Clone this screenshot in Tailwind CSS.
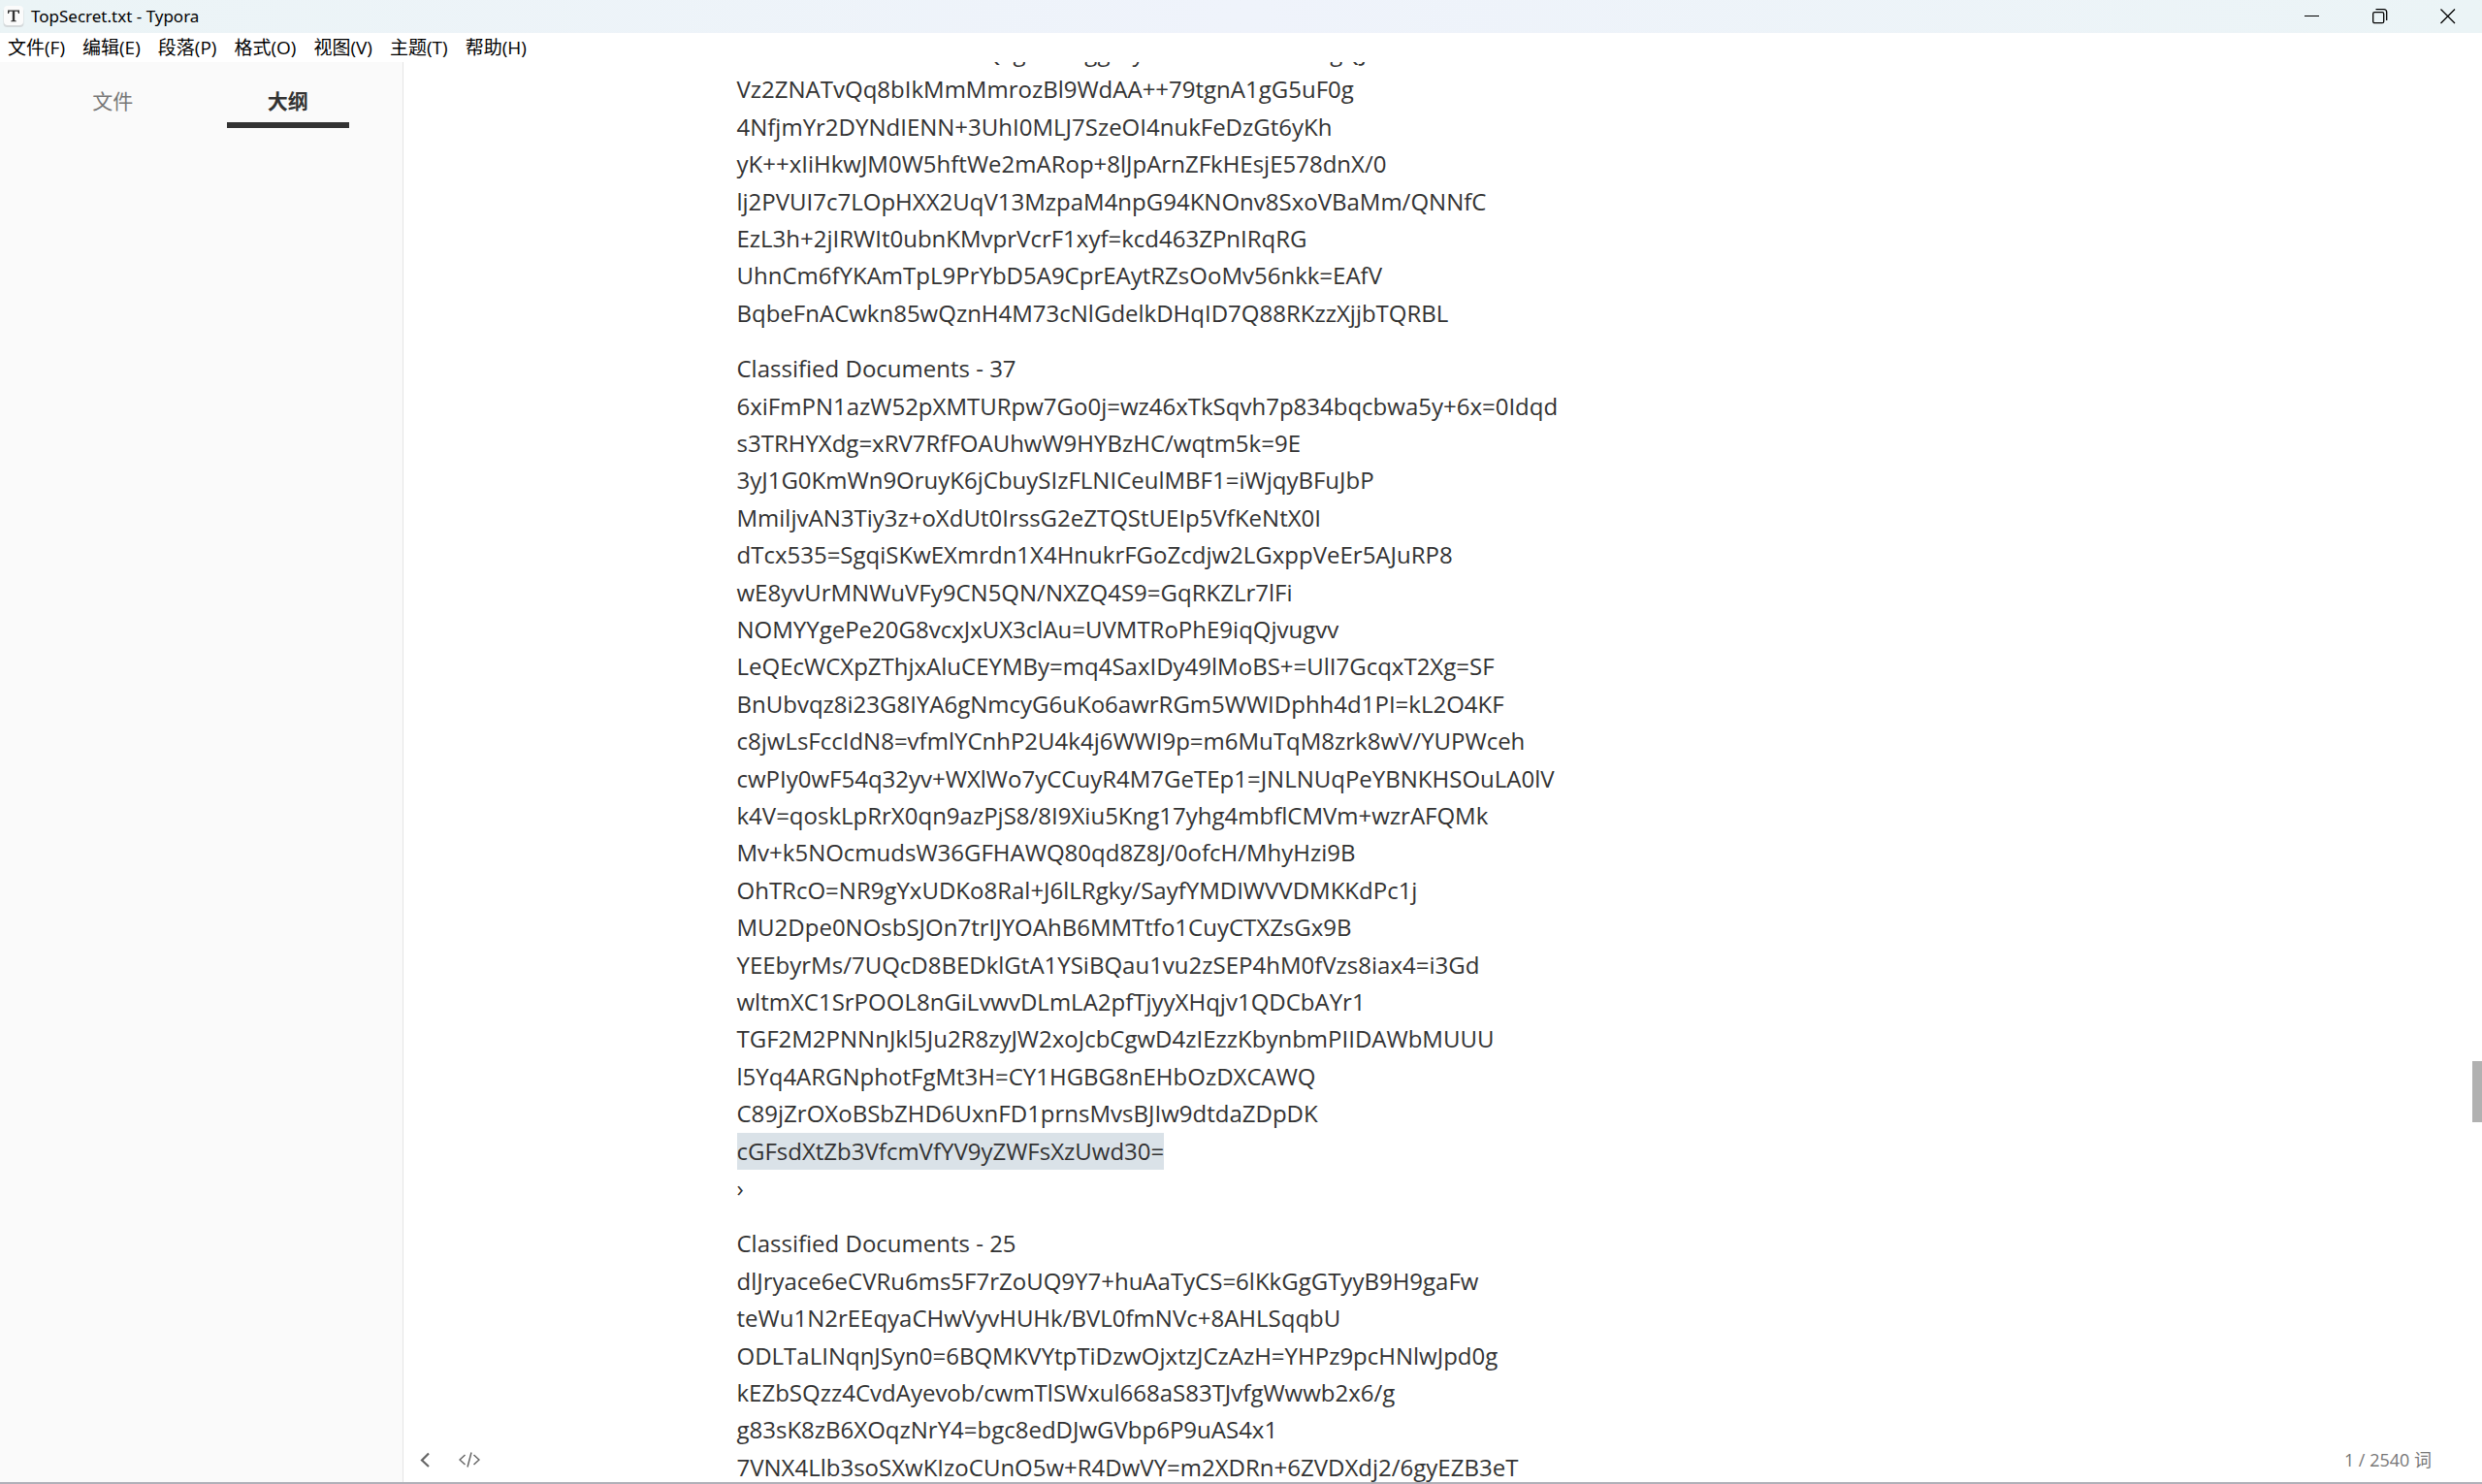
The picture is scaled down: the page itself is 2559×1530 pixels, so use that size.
<!DOCTYPE html>
<html lang="zh-CN">
<head>
<meta charset="utf-8">
<title>TopSecret.txt - Typora</title>
<script src="https://cdn.jsdelivr.net/npm/@tailwindcss/browser@4"></script>
</head>
<body class="flex h-screen flex-col overflow-hidden border-b-2 border-[#b0b0b8] bg-white font-['Open_Sans','Noto_Sans_CJK_SC',sans-serif] text-[#333]">
  <header class="flex h-[34px] shrink-0 items-center bg-linear-to-r from-[#ebf4f6] via-[#eff3fb] to-[#ebf4f6] text-black">
    <svg class="ml-[3px] size-[22px]" viewBox="0 0 22 22">
      <rect x="0.5" y="2" width="21" height="20" rx="4" fill="#d5d9db"/>
      <rect x="1" y="0" width="20" height="20" rx="4" fill="#fbfbfb"/>
      <path d="M5 4.500H17V8H16L15.200 5.700H12.200V15L13.800 15.500V16.200H8.200V15.500L9.800 15V5.700H6.800L6 8H5Z" fill="#333"/>
    </svg>
    <h1 class="ml-[7px] grow font-['Noto_Sans',sans-serif] text-[17px] leading-6">TopSecret.txt - Typora</h1>
    <button aria-label="最小化" class="flex h-full w-[70px] items-center justify-center"><svg class="size-4" viewBox="0 0 16 16"><path d="M0 7.500H15" stroke="#000" fill="none"/></svg></button>
    <button aria-label="还原" class="flex h-full w-[70px] items-center justify-center"><svg class="size-4" viewBox="0 0 16 16" fill="none" stroke="#000" stroke-width="1.300"><rect x="0.700" y="3.700" width="11" height="11" rx="1.500"/><path d="M3.500 0.700H12A2.700 2.700 0 0 1 14.700 3.400V12"/></svg></button>
    <button aria-label="关闭" class="flex h-full w-[70px] items-center justify-center"><svg class="size-4" viewBox="0 0 16 16"><path d="M0.500 0.500L15 15M15 0.500L0.500 15" stroke="#000" stroke-width="1.300" fill="none"/></svg></button>
  </header>
  <nav class="flex h-[30px] shrink-0 items-center gap-[18px] px-2 text-[19px] leading-6 text-black">
    <button>文件(F)</button>
    <button>编辑(E)</button>
    <button>段落(P)</button>
    <button>格式(O)</button>
    <button>视图(V)</button>
    <button>主题(T)</button>
    <button>帮助(H)</button>
  </nav>
  <div class="flex min-h-0 grow">
    <aside class="w-[416px] shrink-0 border-r border-[#e5e5e5] bg-[#fafafa] pt-6 pr-7 pl-[26px]">
      <div role="tablist" class="flex text-[21px] leading-8">
        <button role="tab" class="mx-[27px] flex-1 border-b-6 border-transparent pb-1.5 text-[#777]">文件</button>
        <button role="tab" aria-selected="true" class="mx-[27px] flex-1 border-b-6 border-[#333] pb-1.5 font-bold">大纲</button>
      </div>
    </aside>
    <div class="relative flex min-w-0 grow">
      <main class="min-w-0 grow overflow-hidden">
        <article class="mx-auto -mt-[29px] max-w-[1536px] px-[45px] text-[24px] leading-[1.6]">
          <p class="mb-[0.8em]">Tn3DKx0uRmXW7bNfkQzgHN4sggEryW8AhMvK5NsXZIgQJ<br>
Vz2ZNATvQq8bIkMmMmrozBl9WdAA++79tgnA1gG5uF0g<br>
4NfjmYr2DYNdIENN+3UhI0MLJ7SzeOI4nukFeDzGt6yKh<br>
yK++xIiHkwJM0W5hftWe2mARop+8lJpArnZFkHEsjE578dnX/0<br>
lj2PVUI7c7LOpHXX2UqV13MzpaM4npG94KNOnv8SxoVBaMm/QNNfC<br>
EzL3h+2jIRWIt0ubnKMvprVcrF1xyf=kcd463ZPnIRqRG<br>
UhnCm6fYKAmTpL9PrYbD5A9CprEAytRZsOoMv56nkk=EAfV<br>
BqbeFnACwkn85wQznH4M73cNlGdelkDHqID7Q88RKzzXjjbTQRBL</p>
          <p class="mb-[0.8em]">Classified Documents - 37<br>
6xiFmPN1azW52pXMTURpw7Go0j=wz46xTkSqvh7p834bqcbwa5y+6x=0Idqd<br>
s3TRHYXdg=xRV7RfFOAUhwW9HYBzHC/wqtm5k=9E<br>
3yJ1G0KmWn9OruyK6jCbuySIzFLNICeulMBF1=iWjqyBFuJbP<br>
MmiljvAN3Tiy3z+oXdUt0IrssG2eZTQStUEIp5VfKeNtX0I<br>
dTcx535=SgqiSKwEXmrdn1X4HnukrFGoZcdjw2LGxppVeEr5AJuRP8<br>
wE8yvUrMNWuVFy9CN5QN/NXZQ4S9=GqRKZLr7lFi<br>
NOMYYgePe20G8vcxJxUX3clAu=UVMTRoPhE9iqQjvugvv<br>
LeQEcWCXpZThjxAluCEYMBy=mq4SaxIDy49lMoBS+=UlI7GcqxT2Xg=SF<br>
BnUbvqz8i23G8IYA6gNmcyG6uKo6awrRGm5WWIDphh4d1PI=kL2O4KF<br>
c8jwLsFccIdN8=vfmlYCnhP2U4k4j6WWI9p=m6MuTqM8zrk8wV/YUPWceh<br>
cwPIy0wF54q32yv+WXlWo7yCCuyR4M7GeTEp1=JNLNUqPeYBNKHSOuLA0lV<br>
k4V=qoskLpRrX0qn9azPjS8/8I9Xiu5Kng17yhg4mbflCMVm+wzrAFQMk<br>
Mv+k5NOcmudsW36GFHAWQ80qd8Z8J/0ofcH/MhyHzi9B<br>
OhTRcO=NR9gYxUDKo8Ral+J6lLRgky/SayfYMDIWVVDMKKdPc1j<br>
MU2Dpe0NOsbSJOn7trIJYOAhB6MMTtfo1CuyCTXZsGx9B<br>
YEEbyrMs/7UQcD8BEDklGtA1YSiBQau1vu2zSEP4hM0fVzs8iax4=i3Gd<br>
wltmXC1SrPOOL8nGiLvwvDLmLA2pfTjyyXHqjv1QDCbAYr1<br>
TGF2M2PNNnJkl5Ju2R8zyJW2xoJcbCgwD4zIEzzKbynbmPIIDAWbMUUU<br>
l5Yq4ARGNphotFgMt3H=CY1HGBG8nEHbOzDXCAWQ<br>
C89jZrOXoBSbZHD6UxnFD1prnsMvsBJIw9dtdaZDpDK<br>
<mark class="inline-block bg-[#dae2e8] text-inherit">cGFsdXtZb3VfcmVfYV9yZWFsXzUwd30=</mark><br>
›</p>
          <p>Classified Documents - 25<br>
dlJryace6eCVRu6ms5F7rZoUQ9Y7+huAaTyCS=6lKkGgGTyyB9H9gaFw<br>
teWu1N2rEEqyaCHwVyvHUHk/BVL0fmNVc+8AHLSqqbU<br>
ODLTaLINqnJSyn0=6BQMKVYtpTiDzwOjxtzJCzAzH=YHPz9pcHNlwJpd0g<br>
kEZbSQzz4CvdAyevob/cwmTlSWxul668aS83TJvfgWwwb2x6/g<br>
g83sK8zB6XOqzNrY4=bgc8edDJwGVbp6P9uAS4x1<br>
7VNX4Llb3soSXwKIzoCUnO5w+R4DwVY=m2XDRn+6ZVDXdj2/6gyEZB3eT</p>
        </article>
      </main>
      <div class="flex w-[10px] shrink-0 flex-col">
        <div class="h-[1030px] shrink"></div>
        <div class="h-[63px] shrink-0 bg-[#b1b1b1]"></div>
      </div>
      <footer class="absolute inset-x-0 bottom-[7px] flex h-8 items-center justify-between pr-[52px] pl-[14px] text-[#666]">
        <div class="flex items-center gap-[27px]">
          <button aria-label="隐藏侧边栏"><svg class="h-4 w-[16px]" viewBox="0 0 16 16"><path d="M12 1.500L5 8.500L12 15" stroke="#666" stroke-width="2.200" fill="none"/></svg></button>
          <button aria-label="源代码模式"><svg class="h-4 w-[22px]" viewBox="0 0 22 16"><path d="M6.500 3L1 8L6.500 13M15.500 3L21 8L15.500 13M13 0.500L9 15.500" stroke="#666" stroke-width="1.500" fill="none"/></svg></button>
        </div>
        <button class="text-[18px] leading-6 text-[#777]">1 / 2540 词</button>
      </footer>
    </div>
  </div>
</body>
</html>
